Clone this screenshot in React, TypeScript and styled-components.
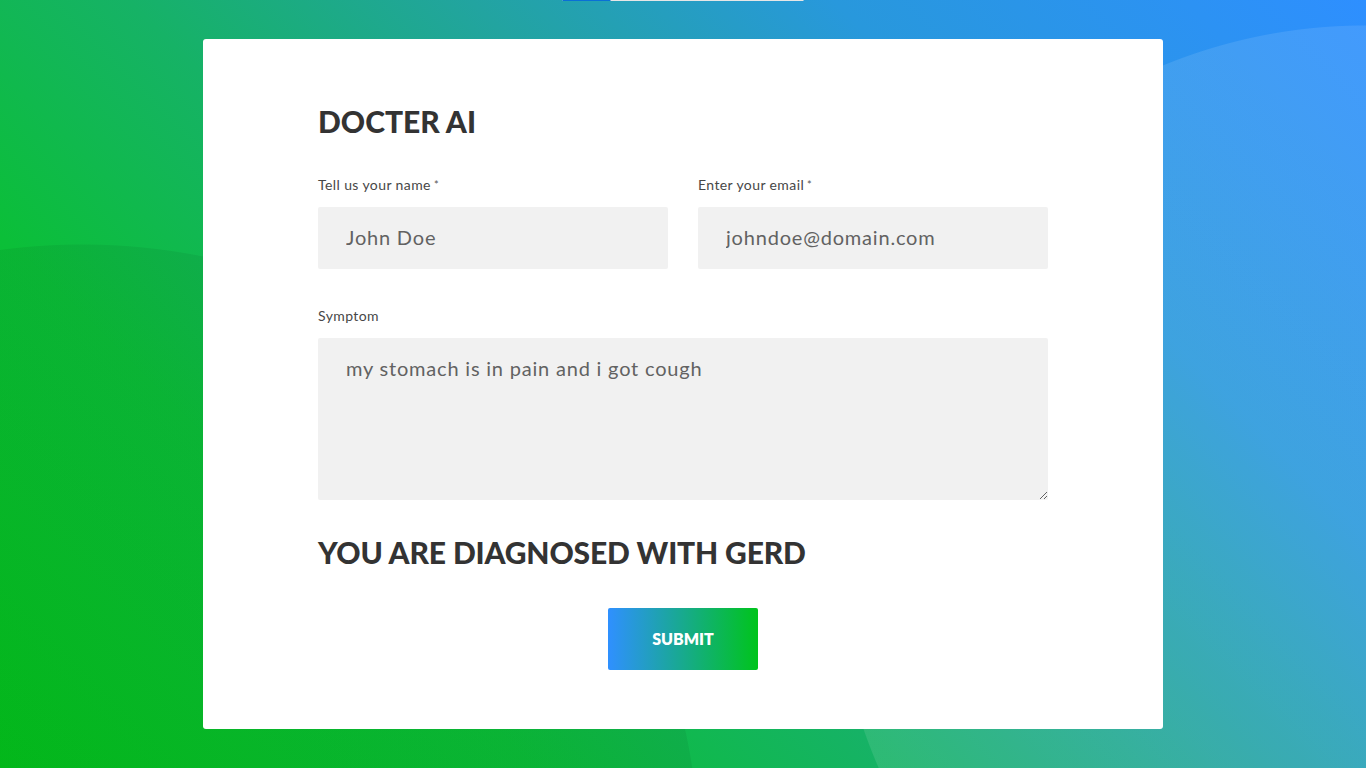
import React from "react";
import styled, { createGlobalStyle } from "styled-components";

const Global = createGlobalStyle`
  html, body {
    margin: 0;
    padding: 0;
    height: 100%;
    overflow: hidden;
  }
  body {
    font-family: Lato, "Open Sans", sans-serif;
  }
  #root {
    height: 100%;
  }
`;

const Page = styled.div`
  position: relative;
  height: 100vh;
  display: flex;
  align-items: center;
  justify-content: center;
  background:
    radial-gradient(circle 531px at 1365px 556px, rgba(255, 255, 255, 0.1) 530px, rgba(255, 255, 255, 0) 531px),
    radial-gradient(circle 618px at 82px 862px, rgba(0, 30, 10, 0.07) 617px, rgba(0, 0, 0, 0) 618px),
    linear-gradient(45deg, #03c31b 0%, #0bbf38 25%, #16b266 42%, #22a4a0 58%, #2898dc 75%, #2e8fff 100%);
`;

const TopProgress = styled.div`
  position: absolute;
  top: 0;
  left: 50%;
  transform: translateX(-50%);
  width: 241px;
  height: 1px;
  background: #e6e6e6;
`;

const TopProgressFill = styled.div<{ $pct: number }>`
  width: ${(p) => p.$pct}%;
  height: 100%;
  background: #0a6fd6;
`;

const Card = styled.form`
  width: 960px;
  height: 690px;
  box-sizing: border-box;
  background: #ffffff;
  border-radius: 3px;
  padding: 64px 115px 59px;
  display: flex;
  flex-direction: column;
`;

const Title = styled.h1`
  margin: 0;
  font-family: Lato, sans-serif;
  font-weight: 900;
  font-size: 30px;
  line-height: 36px;
  color: #333333;
  text-transform: uppercase;
`;

const Row = styled.div`
  display: grid;
  grid-template-columns: 1fr 1fr;
  column-gap: 30px;
  margin-top: 37px;
`;

const Field = styled.div<{ $mt?: number }>`
  display: flex;
  flex-direction: column;
  margin-top: ${(p) => p.$mt ?? 0}px;
`;

const Label = styled.label`
  font-family: Lato, sans-serif;
  font-size: 14px;
  line-height: 18px;
  letter-spacing: 0.4px;
  color: #474747;
  margin-bottom: 13px;
`;

const Star = styled.span`
  font-size: 11px;
  vertical-align: top;
  margin-left: 3px;
  color: #555;
`;

const TextInput = styled.input`
  height: 62px;
  box-sizing: border-box;
  border: none;
  outline: none;
  border-radius: 2px;
  background: #f1f1f1;
  padding: 0 28px 2px;
  font-family: Lato, sans-serif;
  font-size: 20px;
  letter-spacing: 0.8px;
  color: #626262;
`;

const TextArea = styled.textarea`
  height: 162px;
  box-sizing: border-box;
  border: none;
  outline: none;
  border-radius: 2px;
  background: #f1f1f1;
  padding: 18px 28px;
  font-family: Lato, sans-serif;
  font-size: 20px;
  line-height: 24px;
  letter-spacing: 0.8px;
  color: #626262;
  resize: both;
`;

const Result = styled.h2`
  margin: 34px 0 0;
  font-family: Lato, sans-serif;
  font-weight: 900;
  font-size: 30px;
  line-height: 36px;
  letter-spacing: -0.15px;
  color: #333333;
  text-transform: uppercase;
`;

const Actions = styled.div`
  display: flex;
  justify-content: center;
  margin-top: 38px;
`;

const SubmitButton = styled.button`
  width: 150px;
  height: 62px;
  border: none;
  border-radius: 2px;
  padding: 0 0 2px;
  background: linear-gradient(90deg, #2f90ff 0%, #00c41c 100%);
  color: #ffffff;
  font-family: Lato, sans-serif;
  font-weight: 800;
  font-size: 16px;
  text-transform: uppercase;
  cursor: pointer;
`;

export default function App() {
  return (
    <>
      <Global />
      <Page>
        <TopProgress>
          <TopProgressFill $pct={20} />
        </TopProgress>
        <Card onSubmit={(e) => e.preventDefault()}>
          <Title>Docter AI</Title>
          <Row>
            <Field>
              <Label>
                Tell us your name<Star>*</Star>
              </Label>
              <TextInput defaultValue="John Doe" />
            </Field>
            <Field>
              <Label>
                Enter your email<Star>*</Star>
              </Label>
              <TextInput defaultValue="johndoe@domain.com" />
            </Field>
          </Row>
          <Field $mt={38}>
            <Label>Symptom</Label>
            <TextArea defaultValue="my stomach is in pain and i got cough" />
          </Field>
          <Result>You are diagnosed with GERD</Result>
          <Actions>
            <SubmitButton type="submit">Submit</SubmitButton>
          </Actions>
        </Card>
      </Page>
    </>
  );
}
